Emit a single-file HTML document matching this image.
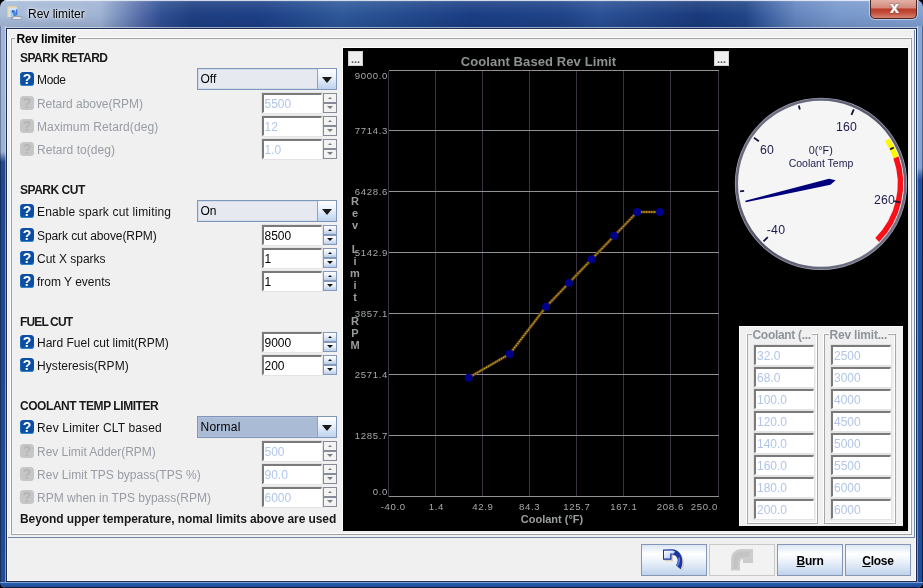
<!DOCTYPE html>
<html><head><meta charset="utf-8"><title>Rev limiter</title>
<style>
*{box-sizing:border-box;margin:0;padding:0}
html,body{width:923px;height:588px;overflow:hidden;background:#000}
body{font-family:"Liberation Sans",sans-serif;font-size:12px;color:#000;position:relative}
.abs,.win *{position:absolute}
.win{will-change:transform;position:absolute;left:0;top:0;width:923px;height:588px;border-radius:7px 7px 6px 6px;overflow:hidden;
 background:linear-gradient(90deg,#a9bcd9 0px,#9fb3d3 100px,#7189ba 124px,#5269a8 142px,#2f4f92 162px,#1e3f82 192px,#1c3f86 260px,#2d5899 341px,#234a8e 406px,#1a3d83 471px,#1e4388 560px,#2a5095 600px,#193a7c 698px,#1f4587 745px,#3a5e9f 764px,#6485be 796px,#7797cb 835px,#82a1d3 923px)}
.tb-top{left:0;top:0;width:923px;height:1px;background:rgba(240,245,252,.85)}
.tb-hl{left:1px;top:1px;width:921px;height:1px;background:rgba(255,255,255,.18)}
.tb-shade{left:0;top:2px;width:923px;height:26px;background:linear-gradient(180deg,rgba(255,255,255,.10),rgba(255,255,255,0) 50%,rgba(0,0,20,.10))}
.title{left:28px;top:7px;font-size:12px;line-height:15px;color:#000;white-space:nowrap;text-shadow:0 0 6px rgba(255,255,255,.9),0 0 3px rgba(255,255,255,.8)}
.closeb{left:870px;top:0;width:47px;height:19px;border:1px solid #4a2420;border-top:none;border-radius:0 0 5px 5px;
 background:linear-gradient(180deg,#e3b0a6 0,#d28a7c 44%,#bb3a28 50%,#c24c38 70%,#d68474 100%);box-shadow:0 0 0 1px rgba(235,240,250,.55)}
.closeb span{left:1px;top:0;width:45px;text-align:center;color:#fff;font-weight:bold;font-size:16px;line-height:15px;text-shadow:0 0 1px #40201c,.5px 0 0 #fff,-.5px 0 0 #fff,0 0 2px #50302c}
.sideL{left:0;top:26px;width:6px;height:562px;background:linear-gradient(180deg,#a2b5d5 0,#9db1d3 126px,#5c7db4 131px,#21478d 136px,#1e4891 300px,#204c98 562px)}
.sideL:after{content:"";position:absolute;left:0;top:0;width:1px;height:562px;background:linear-gradient(180deg,#6d7f9f 0,#6d7f9f 126px,#16305e 136px)}
.sideL:before{content:"";position:absolute;left:5px;top:0;width:1px;height:562px;background:linear-gradient(180deg,#c9d5e8 0,#c3d0e5 126px,#6f93cc 136px,#7a9cd2 562px)}
.sideR{left:917px;top:26px;width:6px;height:562px;background:linear-gradient(180deg,#89a7d7 0,#85a3d4 142px,#4a73b6 148px,#2150a0 154px,#204e9c 562px)}
.sideR:after{content:"";position:absolute;left:5px;top:0;width:1px;height:562px;background:linear-gradient(180deg,#52688f 0,#4b6188 142px,#0e1f42 154px)}
.sideR:before{content:"";position:absolute;left:0;top:0;width:1px;height:562px;background:linear-gradient(180deg,#c3d2ea 0,#bccde8 142px,#7598d0 154px)}
.botB{left:0;top:582px;width:923px;height:6px;background:linear-gradient(180deg,#7d9fd4 0,#7d9fd4 1px,#2a5cab 1px,#2354a2 3px,#1f4c96 5px,#0e1c3a 5px)}
.tb-bl{left:6px;top:27px;width:911px;height:1px;background:rgba(225,235,250,.62)}
.content{left:6px;top:28px;width:911px;height:554px;background:#f0f0f0;border:1px solid #1c2c50;box-shadow:inset 0 0 0 1px #fcfcfc}
.gb{border:1px solid #a0a0a0}
.gw{border:1px solid #fff}
.gbt{background:#f0f0f0;font-weight:bold;white-space:nowrap;line-height:14px}
.sec{font-weight:bold;white-space:nowrap;line-height:14px;left:20px;color:#1a1a1a}
.lbl{white-space:nowrap;line-height:14px;left:37px;color:#141414}
.dis{color:#989ca4}
.hi{left:20px;width:14px;height:14px;border-radius:3.5px;background:#0c4ea4;color:#fff;font-weight:bold;font-size:14px;line-height:14px;text-align:center;box-shadow:inset 0 -1px 0 #2a86c8, inset 1px 0 0 #1a64b4}
.hi i{font-style:normal;left:0;top:0;width:14px;text-align:center}
.hid{background:#c6c6c6;color:#b4b4b4;box-shadow:none}
.cb{left:197px;width:140px;height:22px;border:1px solid #7f95b9;background:#e6e9ef;box-shadow:inset 0 0 0 1px #d3dcea}
.cb.sel{background:#a9bbd5;box-shadow:inset 0 0 0 1px #b3c2da}
.cb.sel span{letter-spacing:.25px}
.cb span{left:2.5px;top:3px;line-height:14px;white-space:nowrap}
.cb b{left:119px;top:0;width:19px;height:20px;border-left:1px solid #8da2c4;background:linear-gradient(180deg,#fdfeff 0,#e8f0fa 45%,#bcd2ec 100%)}
.cb b:after{content:"";position:absolute;left:4px;top:8px;border:5px solid transparent;border-top:6px solid #1a1a1a;border-bottom:none}
.sp{left:262px;width:60px;height:20px;background:#fff;border:1px solid #fff;border-top:2px solid #7a7a7a;border-left:2px solid #7a7a7a;box-shadow:0 0 0 1px #e3e3e3}
.sp span{left:.5px;top:1.5px;line-height:14px;white-space:nowrap;letter-spacing:0}
.sp.d span{color:#b0c5e8}
.sb{left:323px;width:14px;height:10px;border:1px solid #858c98;background:#f3f3f3}
.sb:after{content:"";position:absolute;border:3px solid transparent}
.sb.u:after{left:3.5px;top:2.5px;border-width:0 2.5px 2.5px 2.5px;border-bottom-color:#787e84}
.sb.dn:after{left:3px;top:2px;border-width:3px 3px 0 3px;border-top-color:#787e84}
.sb.e{border-color:#8398ba;background:linear-gradient(180deg,#fdfeff 0,#e4edf8 50%,#b9cde6 100%)}
.sb.u.e:after{border-bottom-color:#111}
.sb.dn.e:after{border-top-color:#111}
.btn{top:544px;width:66px;height:32px;border:1px solid #8496b4;background:linear-gradient(180deg,#dbe6f4 0,#ffffff 30%,#e6eef8 60%,#bfd3ec 100%);text-align:center;font-weight:bold;line-height:32px;font-size:12px;letter-spacing:-.25px}
.btn.off{background:#f2f2f2;border-color:#c9c9c9}
.btn span{position:static}
.btn u{position:static}
.tf{width:60px;height:20px;background:#fff;border:1px solid #fff;border-top:2px solid #7a7a7a;border-left:2px solid #7a7a7a;box-shadow:0 0 0 1px #e3e3e3}
.tf span{left:1px;top:2px;line-height:14px;color:#b0c5e8;white-space:nowrap}
svg text{font-family:"Liberation Sans",sans-serif}
</style></head><body>
<div class="win">
<div class="tb-shade"></div><div class="tb-top"></div><div class="tb-hl"></div><div class="tb-bl"></div>
<svg class="abs" style="left:6px;top:5px" width="18" height="18" viewBox="6 5 18 18"><rect x="8" y="7" width="9" height="10" fill="#cfe2f6"/><path d="M8 17.2V7h8.6" fill="none" stroke="#ecd596" stroke-width="1.3"/><path d="M10.5 10.5h5.5v6h-5.5z" fill="#9fd0f0"/><path d="M12 10.4c1.6-.8 3.4.2 3.6 2l.6 3.6h-2.5z" fill="#4a86d8"/><circle cx="12.6" cy="11.6" r="1" fill="#2a5cc0"/><path d="M16.6 9.5v6" stroke="#3f6fd0" stroke-width="1.2"/><path d="M13 17.9h7.8" stroke="#8f949c" stroke-width="3.4" stroke-linecap="round"/><path d="M13 17.9h7.8" stroke="#e6e6e6" stroke-width="2" stroke-linecap="round"/><path d="M20.2 17.9h2.2" stroke="#9fb2d2" stroke-width="1.4"/><circle cx="12.6" cy="17.9" r=".8" fill="#8aa0d0"/></svg>
<div class="title">Rev limiter</div>
<div class="closeb"><span>x</span></div>
<div class="sideL"></div><div class="sideR"></div><div class="botB"></div>
<div class="content"></div>

<div class="gw" style="left:10px;top:37px;width:901px;height:497px"></div><div class="gb" style="left:11px;top:38px;width:901px;height:497px"></div>
<div class="gbt" style="left:14.5px;top:32px;padding:0 2px;letter-spacing:-.2px">Rev limiter</div>
<div class="abs" style="left:8px;top:537px;width:907px;height:1px;background:#6f86aa"></div>
<div class="abs" style="left:914px;top:30px;width:1px;height:508px;background:#6f86aa"></div>
<div class="sec" style="top:51px;letter-spacing:-0.509px">SPARK RETARD</div>
<div class="hi" style="top:72px"><i>?</i></div>
<div class="lbl" style="top:72.5px;letter-spacing:-0.367px">Mode</div>
<div class="cb" style="top:68px"><span>Off</span><b></b></div>
<div class="hi hid" style="top:96px"><i>?</i></div>
<div class="lbl dis" style="top:96.5px;letter-spacing:-0.047px">Retard above(RPM)</div>
<div class="sp d" style="top:93px"><span>5500</span></div>
<div class="sb u" style="top:93px"></div><div class="sb dn" style="top:103px"></div>
<div class="hi hid" style="top:119px"><i>?</i></div>
<div class="lbl dis" style="top:119.5px;letter-spacing:0.108px">Maximum Retard(deg)</div>
<div class="sp d" style="top:116px"><span>12</span></div>
<div class="sb u" style="top:116px"></div><div class="sb dn" style="top:126px"></div>
<div class="hi hid" style="top:142px"><i>?</i></div>
<div class="lbl dis" style="top:142.5px;letter-spacing:0.046px">Retard to(deg)</div>
<div class="sp d" style="top:139px"><span>1.0</span></div>
<div class="sb u" style="top:139px"></div><div class="sb dn" style="top:149px"></div>
<div class="sec" style="top:183px;letter-spacing:-0.481px">SPARK CUT</div>
<div class="hi" style="top:204px"><i>?</i></div>
<div class="lbl" style="top:204.5px;letter-spacing:0.165px">Enable spark cut limiting</div>
<div class="cb" style="top:200px"><span>On</span><b></b></div>
<div class="hi" style="top:228px"><i>?</i></div>
<div class="lbl" style="top:228.5px;letter-spacing:-0.084px">Spark cut above(RPM)</div>
<div class="sp" style="top:225px"><span>8500</span></div>
<div class="sb u e" style="top:225px"></div><div class="sb dn e" style="top:235px"></div>
<div class="hi" style="top:251px"><i>?</i></div>
<div class="lbl" style="top:251.5px;letter-spacing:-0.018px">Cut X sparks</div>
<div class="sp" style="top:248px"><span>1</span></div>
<div class="sb u e" style="top:248px"></div><div class="sb dn e" style="top:258px"></div>
<div class="hi" style="top:274px"><i>?</i></div>
<div class="lbl" style="top:274.5px;letter-spacing:-0.012px">from Y events</div>
<div class="sp" style="top:271px"><span>1</span></div>
<div class="sb u e" style="top:271px"></div><div class="sb dn e" style="top:281px"></div>
<div class="sec" style="top:315px;letter-spacing:-0.871px">FUEL CUT</div>
<div class="hi" style="top:335px"><i>?</i></div>
<div class="lbl" style="top:335.5px;letter-spacing:0.017px">Hard Fuel cut limit(RPM)</div>
<div class="sp" style="top:332px"><span>9000</span></div>
<div class="sb u e" style="top:332px"></div><div class="sb dn e" style="top:342px"></div>
<div class="hi" style="top:358px"><i>?</i></div>
<div class="lbl" style="top:358.5px;letter-spacing:0.075px">Hysteresis(RPM)</div>
<div class="sp" style="top:355px"><span>200</span></div>
<div class="sb u e" style="top:355px"></div><div class="sb dn e" style="top:365px"></div>
<div class="sec" style="top:399px;letter-spacing:-0.442px">COOLANT TEMP LIMITER</div>
<div class="hi" style="top:420px"><i>?</i></div>
<div class="lbl" style="top:420.5px;letter-spacing:0.157px">Rev Limiter CLT based</div>
<div class="cb sel" style="top:416px"><span>Normal</span><b></b></div>
<div class="hi hid" style="top:444px"><i>?</i></div>
<div class="lbl dis" style="top:444.5px;letter-spacing:-0.032px">Rev Limit Adder(RPM)</div>
<div class="sp d" style="top:441px"><span>500</span></div>
<div class="sb u" style="top:441px"></div><div class="sb dn" style="top:451px"></div>
<div class="hi hid" style="top:467px"><i>?</i></div>
<div class="lbl dis" style="top:467.5px;letter-spacing:0.025px">Rev Limit TPS bypass(TPS %)</div>
<div class="sp d" style="top:464px"><span>90.0</span></div>
<div class="sb u" style="top:464px"></div><div class="sb dn" style="top:474px"></div>
<div class="hi hid" style="top:490px"><i>?</i></div>
<div class="lbl dis" style="top:490.5px;letter-spacing:0.006px">RPM when in TPS bypass(RPM)</div>
<div class="sp d" style="top:487px"><span>6000</span></div>
<div class="sb u" style="top:487px"></div><div class="sb dn" style="top:497px"></div>
<div class="sec" style="top:512px;letter-spacing:-0.087px">Beyond upper temperature, nomal limits above are used</div>
<div class="abs" style="left:343px;top:48px;width:565px;height:483px;background:#000;box-shadow:-1px -1px 0 #fdfdfd"></div>
<svg class="abs" style="left:343px;top:48px" width="565" height="483" viewBox="343 48 565 483" shape-rendering="crispEdges">
<line x1="388.5" y1="70.5" x2="388.5" y2="496.5" stroke="#3c3242"/>
<line x1="435.5" y1="70.5" x2="435.5" y2="496.5" stroke="#3c3242"/>
<line x1="482.5" y1="70.5" x2="482.5" y2="496.5" stroke="#3c3242"/>
<line x1="529.5" y1="70.5" x2="529.5" y2="496.5" stroke="#3c3242"/>
<line x1="576.5" y1="70.5" x2="576.5" y2="496.5" stroke="#3c3242"/>
<line x1="623.5" y1="70.5" x2="623.5" y2="496.5" stroke="#3c3242"/>
<line x1="670.5" y1="70.5" x2="670.5" y2="496.5" stroke="#3c3242"/>
<line x1="718.5" y1="70.5" x2="718.5" y2="496.5" stroke="#3c3242"/>
<line x1="388.5" y1="70.5" x2="718.5" y2="70.5" stroke="#929292"/>
<line x1="388.5" y1="130.5" x2="718.5" y2="130.5" stroke="#929292"/>
<line x1="388.5" y1="191.5" x2="718.5" y2="191.5" stroke="#929292"/>
<line x1="388.5" y1="252.5" x2="718.5" y2="252.5" stroke="#929292"/>
<line x1="388.5" y1="313.5" x2="718.5" y2="313.5" stroke="#929292"/>
<line x1="388.5" y1="374.5" x2="718.5" y2="374.5" stroke="#929292"/>
<line x1="388.5" y1="435.5" x2="718.5" y2="435.5" stroke="#929292"/>
<line x1="388.5" y1="496.5" x2="718.5" y2="496.5" stroke="#929292"/>
<text x="538.5" y="65.5" text-anchor="middle" font-weight="bold" font-size="13" fill="#8d9292" letter-spacing=".1">Coolant Based Rev Limit</text>
<text x="388" y="78.8" text-anchor="end" font-size="9.6" letter-spacing=".65" fill="#a6a9a8">9000.0</text>
<text x="388" y="133.8" text-anchor="end" font-size="9.6" letter-spacing=".65" fill="#a6a9a8">7714.3</text>
<text x="388" y="194.8" text-anchor="end" font-size="9.6" letter-spacing=".65" fill="#a6a9a8">6428.6</text>
<text x="388" y="255.8" text-anchor="end" font-size="9.6" letter-spacing=".65" fill="#a6a9a8">5142.9</text>
<text x="388" y="316.8" text-anchor="end" font-size="9.6" letter-spacing=".65" fill="#a6a9a8">3857.1</text>
<text x="388" y="377.8" text-anchor="end" font-size="9.6" letter-spacing=".65" fill="#a6a9a8">2571.4</text>
<text x="388" y="438.8" text-anchor="end" font-size="9.6" letter-spacing=".65" fill="#a6a9a8">1285.7</text>
<text x="388" y="494.5" text-anchor="end" font-size="9.6" letter-spacing=".65" fill="#a6a9a8">0.0</text>
<text x="393.3" y="510" text-anchor="middle" font-size="9.6" letter-spacing=".65" fill="#a6a9a8">-40.0</text>
<text x="436.3" y="510" text-anchor="middle" font-size="9.6" letter-spacing=".65" fill="#a6a9a8">1.4</text>
<text x="482.8" y="510" text-anchor="middle" font-size="9.6" letter-spacing=".65" fill="#a6a9a8">42.9</text>
<text x="529.5999999999999" y="510" text-anchor="middle" font-size="9.6" letter-spacing=".65" fill="#a6a9a8">84.3</text>
<text x="576.8" y="510" text-anchor="middle" font-size="9.6" letter-spacing=".65" fill="#a6a9a8">125.7</text>
<text x="623.8" y="510" text-anchor="middle" font-size="9.6" letter-spacing=".65" fill="#a6a9a8">167.1</text>
<text x="670.3" y="510" text-anchor="middle" font-size="9.6" letter-spacing=".65" fill="#a6a9a8">208.6</text>
<text x="704.3" y="510" text-anchor="middle" font-size="9.6" letter-spacing=".65" fill="#a6a9a8">250.0</text>
<text x="552" y="523" text-anchor="middle" font-weight="bold" font-size="11" fill="#9a9e9e">Coolant (°F)</text>
<text x="355" y="204.6" text-anchor="middle" font-weight="bold" font-size="11" fill="#9a9e9e">R</text>
<text x="355" y="216.6" text-anchor="middle" font-weight="bold" font-size="11" fill="#9a9e9e">e</text>
<text x="355" y="228.6" text-anchor="middle" font-weight="bold" font-size="11" fill="#9a9e9e">v</text>
<text x="355" y="252.6" text-anchor="middle" font-weight="bold" font-size="11" fill="#9a9e9e">L</text>
<text x="355" y="264.6" text-anchor="middle" font-weight="bold" font-size="11" fill="#9a9e9e">i</text>
<text x="355" y="276.6" text-anchor="middle" font-weight="bold" font-size="11" fill="#9a9e9e">m</text>
<text x="355" y="288.6" text-anchor="middle" font-weight="bold" font-size="11" fill="#9a9e9e">i</text>
<text x="355" y="300.6" text-anchor="middle" font-weight="bold" font-size="11" fill="#9a9e9e">t</text>
<text x="355" y="324.6" text-anchor="middle" font-weight="bold" font-size="11" fill="#9a9e9e">R</text>
<text x="355" y="336.6" text-anchor="middle" font-weight="bold" font-size="11" fill="#9a9e9e">P</text>
<text x="355" y="348.6" text-anchor="middle" font-weight="bold" font-size="11" fill="#9a9e9e">M</text>
<polyline points="468.7,377.7 509.7,354.0 546.1,306.7 568.9,283.0 591.6,259.3 614.4,235.7 637.1,212.0 659.9,212.0" fill="none" stroke="#74501a" stroke-width="2.7" shape-rendering="auto"/>
<polyline points="468.7,377.7 509.7,354.0 546.1,306.7 568.9,283.0 591.6,259.3 614.4,235.7 637.1,212.0 659.9,212.0" fill="none" stroke="#f0dc14" stroke-width="1" stroke-dasharray="1 1.5" shape-rendering="auto"/>
<circle cx="468.7" cy="377.7" r="4" fill="#00008a" shape-rendering="auto"/>
<circle cx="509.7" cy="354.0" r="4" fill="#00008a" shape-rendering="auto"/>
<circle cx="546.1" cy="306.7" r="4" fill="#00008a" shape-rendering="auto"/>
<circle cx="568.9" cy="283.0" r="4" fill="#00008a" shape-rendering="auto"/>
<circle cx="591.6" cy="259.3" r="4" fill="#00008a" shape-rendering="auto"/>
<circle cx="614.4" cy="235.7" r="4" fill="#00008a" shape-rendering="auto"/>
<circle cx="637.1" cy="212.0" r="4" fill="#00008a" shape-rendering="auto"/>
<circle cx="659.9" cy="212.0" r="4" fill="#00008a" shape-rendering="auto"/>
</svg>
<div class="abs" style="left:348px;top:51px;width:15px;height:15px;background:#efefef;border:1px solid #cfcfcf;font-weight:bold;font-size:11px;line-height:15px;text-align:center;color:#555;letter-spacing:0">...</div>
<div class="abs" style="left:714px;top:51px;width:15px;height:15px;background:#efefef;border:1px solid #cfcfcf;font-weight:bold;font-size:11px;line-height:15px;text-align:center;color:#555;letter-spacing:0">...</div>
<svg class="abs" style="left:730px;top:92px" width="178" height="184" viewBox="730 92 178 184">
<defs><linearGradient id="ring" x1="0" y1="0" x2="1" y2="1"><stop offset="0" stop-color="#77788a"/><stop offset=".5" stop-color="#55566a"/><stop offset="1" stop-color="#7c7d90"/></linearGradient></defs>
<circle cx="821" cy="183.8" r="85.5" fill="none" stroke="#9d9fb0" stroke-width="1.3"/>
<circle cx="821" cy="183.8" r="84.2" fill="#f5f5f6" stroke="url(#ring)" stroke-width="2.4"/>
<path d="M887.20 139.78 A79.5 79.5 0 0 1 896.02 157.49" fill="none" stroke="#fcf800" stroke-width="5.5"/>
<path d="M896.02 157.49 A79.5 79.5 0 0 1 877.21 240.01" fill="none" stroke="#fa1018" stroke-width="5.5"/>
<line x1="767.75" y1="237.05" x2="763.51" y2="241.29" stroke="#14143c" stroke-width="1.8"/>
<line x1="744.13" y1="190.92" x2="740.05" y2="191.30" stroke="#14143c" stroke-width="1.8"/>
<line x1="758.88" y1="141.25" x2="753.93" y2="137.85" stroke="#14143c" stroke-width="1.8"/>
<line x1="799.87" y1="109.55" x2="798.75" y2="105.60" stroke="#14143c" stroke-width="1.8"/>
<line x1="851.42" y1="114.92" x2="853.84" y2="109.43" stroke="#14143c" stroke-width="1.8"/>
<line x1="890.11" y1="149.39" x2="893.78" y2="147.56" stroke="#14143c" stroke-width="1.8"/>
<line x1="894.30" y1="201.04" x2="900.14" y2="202.41" stroke="#14143c" stroke-width="1.8"/>
<polygon points="745.29,200.84 745.63,202.30 830.47,184.76 835.60,180.37 829.05,178.72" fill="#00007c"/>
<g font-size="12.3" letter-spacing=".2" fill="#1c1c4c" text-anchor="middle">
<text x="846.5" y="130.7">160</text><text x="767" y="153.7">60</text><text x="776" y="234.3">-40</text><text x="884.5" y="203.7">260</text>
<text x="820.7" y="153.7" font-size="10.8" letter-spacing="0">0(°F)</text><text x="821" y="166.8" font-size="10.5" letter-spacing="0">Coolant Temp</text>
</g></svg>
<div class="abs" style="left:739px;top:326px;width:164px;height:200px;background:#f0f0f0;border-top:1px solid #fbfbfb;border-left:1px solid #fbfbfb"></div>
<div class="gw" style="left:746px;top:333px;width:71px;height:190px"></div><div class="gb" style="left:747px;top:334px;width:71px;height:190px;border-color:#a8a8a8"></div>
<div class="gbt" style="left:751.5px;top:328px;padding:0 1px;color:#8f949c;font-size:12px;letter-spacing:-0.3px">Coolant (...</div>
<div class="tf" style="left:754px;top:345px"><span>32.0</span></div>
<div class="tf" style="left:754px;top:367px"><span>68.0</span></div>
<div class="tf" style="left:754px;top:389px"><span>100.0</span></div>
<div class="tf" style="left:754px;top:411px"><span>120.0</span></div>
<div class="tf" style="left:754px;top:433px"><span>140.0</span></div>
<div class="tf" style="left:754px;top:455px"><span>160.0</span></div>
<div class="tf" style="left:754px;top:477px"><span>180.0</span></div>
<div class="tf" style="left:754px;top:499px"><span>200.0</span></div>
<div class="gw" style="left:823px;top:333px;width:72px;height:190px"></div><div class="gb" style="left:824px;top:334px;width:72px;height:190px;border-color:#a8a8a8"></div>
<div class="gbt" style="left:828.5px;top:328px;padding:0 1px;color:#8f949c;font-size:12px;letter-spacing:-0.2px">Rev limit...</div>
<div class="tf" style="left:831px;top:345px"><span>2500</span></div>
<div class="tf" style="left:831px;top:367px"><span>3000</span></div>
<div class="tf" style="left:831px;top:389px"><span>4000</span></div>
<div class="tf" style="left:831px;top:411px"><span>4500</span></div>
<div class="tf" style="left:831px;top:433px"><span>5000</span></div>
<div class="tf" style="left:831px;top:455px"><span>5500</span></div>
<div class="tf" style="left:831px;top:477px"><span>6000</span></div>
<div class="tf" style="left:831px;top:499px"><span>6000</span></div>
<div class="btn" style="left:641px"></div>
<div class="btn off" style="left:709px"></div>
<div class="btn" style="left:777px"><span><u>B</u>urn</span></div>
<div class="btn" style="left:845px"><span><u>C</u>lose</span></div>
<svg class="abs" style="left:641px;top:544px" width="134" height="32" viewBox="641 544 134 32">
<defs><linearGradient id="ub" x1="0" y1="0" x2="1" y2="1"><stop offset="0" stop-color="#ffffff"/><stop offset="1" stop-color="#a9bdf0"/></linearGradient></defs>
<path transform="translate(1.6 1.5)" d="M663 549.5 L672 549.3 C678 549.5 682.3 554 682.3 562 C682.3 565 681.5 567.5 680.5 569.3 L676 565.3 C677.5 563 678 561 677.5 559 C676.8 556 674.5 554.6 671.5 554.6 L671.5 559.8 L663 559.8 Z" fill="#d8d0bc"/>
<path d="M663 549.5 L672 549.3 C678 549.5 682.3 554 682.3 562 C682.3 565 681.5 567.5 680.5 569.3 L676 565.3 C677.5 563 678 561 677.5 559 C676.8 556 674.5 554.6 671.5 554.6 L671.5 559.8 L663 559.8 Z" fill="#1b35a2"/>
<path d="M664 550.7 L671.5 550.6 C673 550.7 674 551 675 551.5 L673.6 553.8 C672.6 553.5 671.5 553.4 670.2 553.4 L670.2 558.4 L664 558.4 Z" fill="url(#ub)"/>
<path d="M677.3 566 C679 563.5 679.6 560.5 679 557.5" fill="none" stroke="#5f7fdc" stroke-width="1.6"/>
<path d="M731 570.5 L731 560 C731 553 735 549 742 549 L753 549 L753 563 L743 563 L743 559 C741.5 559 740.5 560 740 562 L740 570.5 Z" fill="#cdcdcd"/>
<path d="M733 569 L733 560.5 C733 555 736.5 551.5 742 551.5 L749.5 551.5 L749.5 557 L742.5 557 C739.5 557 738 559 738 562 L738 569 Z" fill="#c4c4c4"/>
</svg>
</div></body></html>
